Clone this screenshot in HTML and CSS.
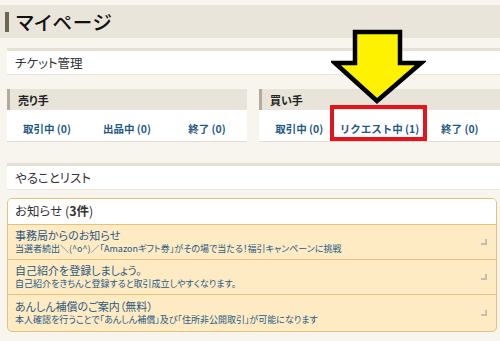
FILE: index.html
```html
<!DOCTYPE html>
<html lang="ja">
<head>
    <meta charset="UTF-8">
    <title>マイページ</title>
    <link rel="stylesheet" href="styles.css">
</head>
<body>
<div class="page">
    <h1 class="page-title">マイページ</h1>

    <div class="content">
        <section class="panel">
            <h2 class="panel-title">チケット管理</h2>
        </section>

        <div class="trade-cols">
            <div class="trade-box">
                <h3 class="trade-head">売り手</h3>
                <ul class="trade-links">
                    <li><a href="#">取引中 (0)</a></li>
                    <li><a href="#">出品中 (0)</a></li>
                    <li><a href="#">終了 (0)</a></li>
                </ul>
            </div>
            <div class="trade-box">
                <h3 class="trade-head">買い手</h3>
                <ul class="trade-links">
                    <li><a href="#">取引中 (0)</a></li>
                    <li><a href="#">リクエスト中 (1)</a></li>
                    <li><a href="#">終了 (0)</a></li>
                </ul>
            </div>
        </div>

        <section class="panel todo">
            <h2 class="panel-title">やることリスト</h2>
        </section>

        <div class="notice">
            <div class="notice-head">お知らせ (<b>3件</b>)</div>
            <a class="notice-item" href="#">
                <span class="notice-text">
                    <span class="notice-title">事務局からのお知らせ</span>
                    <span class="notice-sub">当選者続出＼(^o^)／「Amazonギフト券」がその場で当たる！福引キャンペーンに挑戦</span>
                </span>
                <span class="corner"></span>
            </a>
            <a class="notice-item" href="#">
                <span class="notice-text">
                    <span class="notice-title">自己紹介を登録しましょう。</span>
                    <span class="notice-sub">自己紹介をきちんと登録すると取引成立しやすくなります。</span>
                </span>
                <span class="corner"></span>
            </a>
            <a class="notice-item" href="#">
                <span class="notice-text">
                    <span class="notice-title">あんしん補償のご案内（無料）</span>
                    <span class="notice-sub">本人確認を行うことで「あんしん補償」及び「住所非公開取引」が可能になります</span>
                </span>
                <span class="corner"></span>
            </a>
        </div>
    </div>

    <!-- annotation -->
    <svg class="mark-arrow" width="95" height="76" viewBox="0 0 95 76">
        <polygon points="24,3 69,3 69,34 90,34 46,72 4,34 24,34" fill="#fff200" stroke="#000" stroke-width="4.5" stroke-linejoin="miter"/>
    </svg>
    <div class="mark-box"></div>
</div>
</body>
</html>
```

FILE: styles.css
```css
body {
    margin: 0;
    background-color: #f8f5ee;
    font-family: "Noto Sans CJK JP", "Noto Sans", sans-serif;
    font-feature-settings: "palt";
    color: #333;
    overflow: hidden;
}

.page {
    position: relative;
    padding-top: 5px;
}

.page-title {
    margin: 0;
    height: 33px;
    background-color: #e9e5db;
    display: flex;
    align-items: center;
    padding-left: 5px;
    font-size: 19.5px;
    font-weight: 500;
    color: #111;
    letter-spacing: 0.8px;
}

.page-title::before {
    content: "";
    width: 4px;
    height: 20px;
    background-color: #6b6656;
    margin-right: 7px;
}

.content {
    padding: 10px 0 0 7px;
}

.panel {
    border-top: 3px solid #e4e0d4;
    border-bottom: 1px solid #ebe7de;
    background-color: #fff;
    height: 23px;
    display: flex;
    align-items: center;
}

.panel-title {
    margin: 0;
    padding-left: 8px;
    font-size: 12.5px;
    font-weight: normal;
    color: #333;
}

.trade-cols {
    display: grid;
    grid-template-columns: 240px 1fr;
    gap: 12px;
    margin-top: 14px;
}

.trade-box {
    background-color: #fff;
    border-bottom: 1px solid #e1ddd3;
}

.trade-head {
    margin: 0;
    height: 21px;
    background-color: #e8e4da;
    border-left: 3px solid #b3ab9b;
    padding-left: 8px;
    display: flex;
    align-items: center;
    font-size: 11px;
    color: #222;
}

.trade-links {
    list-style: none;
    margin: 0;
    padding: 0;
    height: 31px;
    display: grid;
    grid-template-columns: repeat(3, 1fr);
    align-items: center;
    text-align: center;
}

.trade-links a {
    color: #1f5a86;
    font-size: 10.5px;
    font-weight: bold;
    font-feature-settings: normal;
    text-decoration: none;
}

.todo {
    margin-top: 21px;
}

.notice {
    margin: 8px 3px 0 0;
    border: 1px solid #e3c27c;
    border-radius: 5px;
    background-color: #feebc4;
    overflow: hidden;
}

.notice-head {
    background-color: #fff;
    height: 23px;
    padding: 0 0 2px 7px;
    display: flex;
    align-items: center;
    font-size: 12.5px;
    color: #333;
    border-bottom: 1px solid #e3c27c;
}

.notice-item {
    display: flex;
    align-items: center;
    height: 34px;
    padding: 0 9px 0 7px;
    text-decoration: none;
    border-bottom: 1px solid #e3c27c;
}

.notice-item:last-child {
    border-bottom: none;
    height: 36px;
}

.notice-text {
    display: flex;
    flex-direction: column;
    flex: 1;
}

.notice-title {
    font-size: 11px;
    color: #2c5a82;
    line-height: 13px;
}

.notice-sub {
    font-size: 9px;
    color: #1f5a86;
    line-height: 13px;
}

.corner {
    width: 4px;
    height: 4px;
    border-right: 2px solid #c5bdad;
    border-bottom: 2px solid #c5bdad;
}

.mark-arrow {
    position: absolute;
    left: 331px;
    top: 29px;
}

.mark-box {
    position: absolute;
    left: 330px;
    top: 105px;
    width: 89px;
    height: 28px;
    border: 4px solid #e3141c;
}
```
